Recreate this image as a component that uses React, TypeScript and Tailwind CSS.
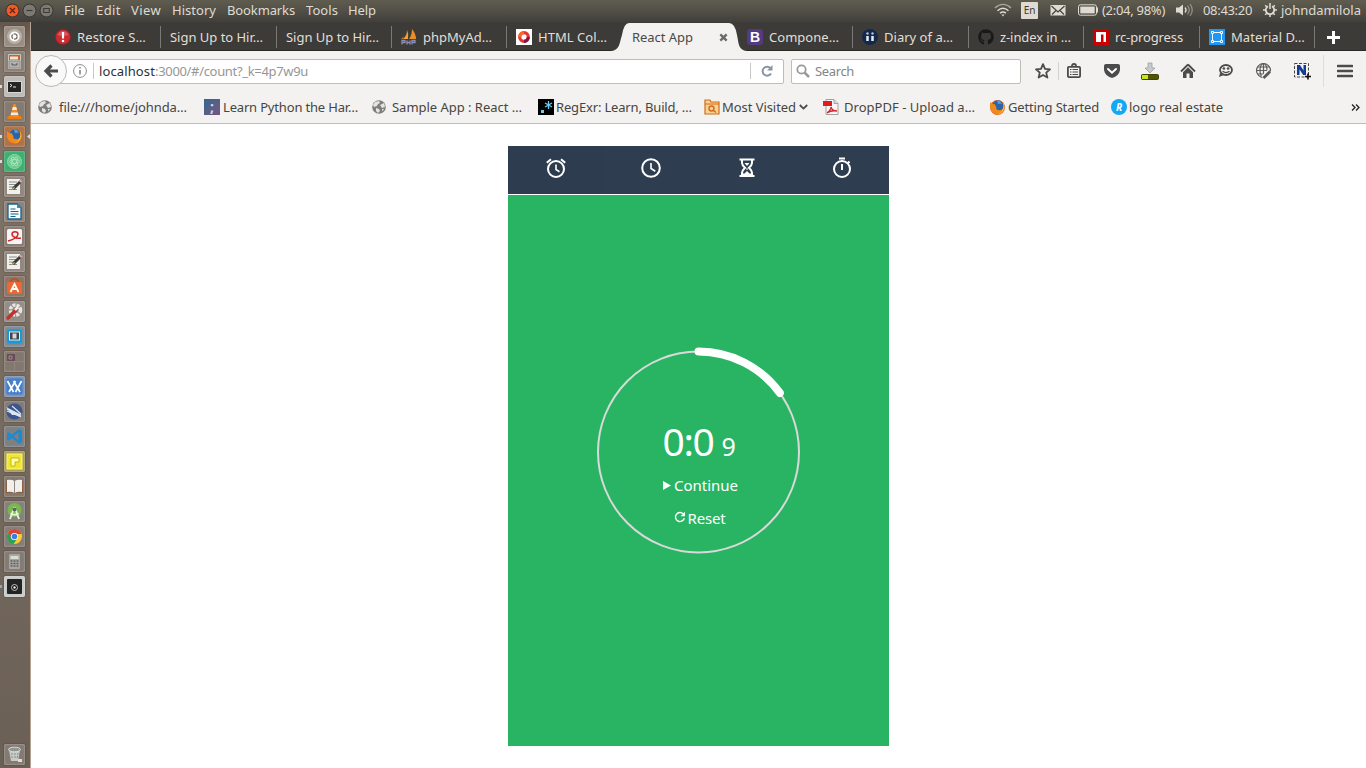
import { useLayoutEffect, useRef, useState } from "react";
import type { ReactNode } from "react";
import { FaGithub } from "react-icons/fa";

/* Single-line label whose letter spacing is adjusted so it fills `w` pixels. */
function Fit({ w, children, className = "" }: { w: number; children: string; className?: string }) {
  const ref = useRef<HTMLSpanElement>(null);
  const [spacing, setSpacing] = useState(0);
  useLayoutEffect(() => {
    if (ref.current) {
      const natural = ref.current.getBoundingClientRect().width - spacing * children.length;
      setSpacing((w - natural) / children.length);
    }
  }, [w, children]);
  return (
    <span ref={ref} className={`inline-block shrink-0 whitespace-nowrap ${className}`} style={{ letterSpacing: spacing }}>
      {children}
    </span>
  );
}

/* ---------- system bar ---------- */
const menus: [string, number, string][] = [
  ["File", 21, "w-8"],
  ["Edit", 25, "w-[35px]"],
  ["View", 30, "w-[41px]"],
  ["History", 44, "w-[55px]"],
  ["Bookmarks", 68, "w-[79px]"],
  ["Tools", 32, "w-[42px]"],
  ["Help", 28, "w-8"],
];

function SystemBar() {
  return (
    <header className="flex h-[22px] shrink-0 items-center bg-linear-to-b from-[#5f5c4f] via-[#524f47] to-[#403f3a] pb-[2px] text-[13px] leading-5 text-[#dfdbd2]">
      <svg width="64" height="22" viewBox="0 0 64 22" className="shrink-0 self-start">
        <circle cx="12.5" cy="10.5" r="6.5" fill="#f0592a" stroke="#38352f" />
        <path d="M10 8l5 5m0-5l-5 5" stroke="#5d2414" strokeWidth="1.2" />
        <circle cx="29.5" cy="10.5" r="6.5" fill="#7b7971" stroke="#383631" />
        <path d="M26.500 10.500h6" stroke="#3c3b37" strokeWidth="1.2" />
        <circle cx="46.500" cy="10.500" r="6.500" fill="#7b7971" stroke="#383631" />
        <rect x="43.700" y="8.500" width="5.600" height="4" fill="none" stroke="#3c3b37" />
      </svg>
      {menus.map(([label, w, cell]) => (
        <div key={label} className={`flex shrink-0 ${cell}`}>
          <Fit w={w}>{label}</Fit>
        </div>
      ))}
      <div className="ml-auto flex items-center">
        <svg width="18" height="16" viewBox="0 0 18 16" fill="none" stroke="#dfdbd2" strokeWidth="1.500" className="mr-[9px]">
          <path d="M1 6c5-4.600 11-4.600 16 0" opacity=".6" />
          <path d="M3.500 8.800c3.500-3.300 7.500-3.300 11 0M6 11.300c2-1.700 4-1.700 6 0" />
          <path d="M7.500 12.500L9 14.500l1.500-2z" fill="#dfdbd2" stroke="none" />
        </svg>
        <div className="mr-[12px] flex h-[17px] w-[17px] items-center justify-center rounded-[1px] bg-[#dfdbd2] text-[10px] leading-none text-[#3c3b37]">En</div>
        <svg width="16" height="12" viewBox="0 0 16 12" className="mr-[12px]">
          <rect x=".5" y="1" width="15" height="10.500" fill="#dfdbd2" />
          <path d="M1.500 2l6.500 6 6.500-6M2 10.500l4-4m8 4l-4-4" fill="none" stroke="#45433d" strokeWidth="1.200" />
        </svg>
        <svg width="21" height="12" viewBox="0 0 21 12" className="mr-[3px]">
          <rect x=".5" y=".8" width="18" height="10.400" rx="2" fill="none" stroke="#dfdbd2" />
          <rect x="2.300" y="2.600" width="14.400" height="6.800" fill="#dfdbd2" />
          <path d="M19.500 3.500v5" stroke="#dfdbd2" />
        </svg>
        <Fit w={63}>(2:04, 98%)</Fit>
        <svg width="17" height="14" viewBox="0 0 17 14" className="mr-[10px] ml-[11px]" fill="none" stroke="#dfdbd2">
          <path d="M0 4.500h3l4-3v11l-4-3H0z" fill="#dfdbd2" stroke="none" />
          <path d="M9 4.500c1.300 1.500 1.300 3.500 0 5" strokeWidth="1.300" />
          <path d="M11.500 2.500c2.300 3 2.300 6 0 9M14 1c3 4 3 8 0 12" opacity=".5" strokeWidth="1.200" />
        </svg>
        <Fit w={49}>08:43:20</Fit>
        <svg width="14" height="14" viewBox="0 0 14 14" className="mr-[4px] ml-[11px]" fill="none" stroke="#dfdbd2">
          <path d="M5 3.300a4.200 4.200 0 1 0 4 0" strokeWidth="1.800" />
          <path d="M7 0v6M2.200 2.200l1.500 1.500M11.800 2.200l-1.500 1.500M0 7h2.500M11.500 7H14M2.200 11.800l1.600-1.600M11.800 11.800l-1.600-1.600M7 14v-3" strokeWidth="1.500" />
        </svg>
        <Fit w={80} className="mr-[5px]">johndamilola</Fit>
      </div>
    </header>
  );
}

/* ---------- launcher ---------- */
const glyphs: { id: string; bg: string; art: ReactNode }[] = [
  { id: "dash", bg: "bg-[#9a8e83]", art: <><circle cx="10.500" cy="10.500" r="7.500" fill="#fff" opacity=".3" /><circle cx="10.500" cy="10.500" r="5" fill="#fff" /><circle cx="10.500" cy="10.500" r="2.600" fill="none" stroke="#7b7068" strokeWidth="1.400" strokeDasharray="4.500 1" /></> },
  { id: "files", bg: "bg-[#8b8077]", art: <><rect x="4" y="3" width="13" height="15" rx="1" fill="#c9c7c3" /><rect x="5" y="4" width="11" height="5" fill="#d35f22" /><path d="M6 5.500h8v3H6z" fill="#f6e6d0" /><rect x="5" y="10" width="11" height="7" fill="#b6b4b0" stroke="#77716b" strokeWidth=".6" /><path d="M8 12v2h5v-2" fill="none" stroke="#555" /></> },
  { id: "terminal", bg: "bg-[#bdbab7]", art: <><rect x="3" y="5" width="15" height="12" rx="1" fill="#d8d8d6" /><rect x="4" y="6" width="13" height="10" fill="#252525" /><path d="M6 8l2 1.500L6 11m3 0h3" fill="none" stroke="#e8e8e8" /></> },
  { id: "vlc", bg: "bg-[#857a71]", art: <><path d="M4 15h13l1 3H3z" fill="#ef7d0a" /><path d="M9.500 3h2L15 16H6z" fill="#f58b1f" /><path d="M8.800 6h3.400l.8 3H8zM7.300 11.500h6.400l.7 2.500H6.600z" fill="#eee" /></> },
  { id: "firefox", bg: "bg-[#ad734b]", art: <Fox /> },
  { id: "atom", bg: "bg-[#3fae70]", art: <><circle cx="10.500" cy="10.500" r="7" fill="#65c98b" stroke="#a3dfba" strokeWidth=".8" /><g fill="none" stroke="#b9e8c9" strokeWidth=".7"><ellipse cx="10.500" cy="10.500" rx="5" ry="2" /><ellipse cx="10.500" cy="10.500" rx="5" ry="2" transform="rotate(60 10.500 10.500)" /><ellipse cx="10.500" cy="10.500" rx="5" ry="2" transform="rotate(120 10.500 10.500)" /></g></> },
  { id: "gedit", bg: "bg-[#91877f]", art: <Pad /> },
  { id: "writer", bg: "bg-[#8d837b]", art: <><path d="M4 3h9l4 4v11H4z" fill="#fafafa" stroke="#15638e" strokeWidth="1.300" /><path d="M13 3l4 4h-4z" fill="#2a93c8" /><path d="M6.500 8h5m-5 2.500h8m-8 2.500h8m-8 2.500h5" stroke="#15638e" strokeWidth="1.200" /></> },
  { id: "evince", bg: "bg-[#8b7c76]", art: <><rect x="3" y="3" width="15" height="15" rx="1.500" fill="#f7f5f3" /><path d="M4 15c5-1 10-4 10-7s-6-3-6 0 5 5 9 4" fill="none" stroke="#cf2828" strokeWidth="1.500" /></> },
  { id: "notes", bg: "bg-[#91877f]", art: <Pad /> },
  { id: "software", bg: "bg-[#8c7468]", art: <><path d="M7 7V4.500Q10.500 1 14 4.500V7" fill="none" stroke="#c24a1a" strokeWidth="1.500" /><rect x="3" y="6" width="15" height="12" rx="1.500" fill="#ec6830" /><path d="M6.500 16l4-8 4 8m-6.500-3h5" fill="none" stroke="#fff" strokeWidth="1.800" /></> },
  { id: "settings", bg: "bg-[#948c86]", art: <><circle cx="11.500" cy="9" r="5" fill="none" stroke="#e7e5e3" strokeWidth="3.500" strokeDasharray="3 1" /><path d="M4 17l8-8" stroke="#c62f2b" strokeWidth="3.500" strokeLinecap="round" /><path d="M11 9l3-3" stroke="#eee" strokeWidth="2.500" /></> },
  { id: "vm", bg: "bg-[#7f8b92]", art: <><rect x="3" y="3.500" width="15" height="14" rx="3" fill="#1b97d5" /><rect x="5.500" y="6" width="10" height="8" fill="#3f4548" stroke="#e6eef2" /><rect x="8.500" y="7.500" width="4" height="5" fill="#d8d8d8" /></> },
  { id: "workspaces", bg: "bg-[#82786f]", art: <><path d="M0 10.500h21M10.500 0v21" stroke="#958b83" strokeWidth=".7" /><rect x="3" y="3" width="8" height="7" fill="#684c56" /><path d="M5 5h3v3H5z" fill="none" stroke="#b8a7ad" strokeWidth=".7" /></> },
  { id: "xx", bg: "bg-[#7d91b0]", art: <><rect x="2.500" y="2.500" width="16" height="16" rx="2" fill="#4380d4" /><path d="M3.500 5l6 11M11.500 5l-6.500 11M9.500 5l6.500 11M17.500 5l-6 11" fill="none" stroke="#fff" strokeWidth="1.700" /></> },
  { id: "kit", bg: "bg-[#827b78]", art: <><circle cx="10.500" cy="10.500" r="8" fill="#3b558d" /><path d="M2 6l16 8H8z" fill="#dde5f2" /><path d="M3 10l14 6M8 5l9 8M3 8l14 7" stroke="#dde5f2" strokeWidth="1.200" /></> },
  { id: "code", bg: "bg-[#7e8082]", art: <><path d="M14.500 3l3.500 2v11l-3.500 2z" fill="#198bd2" /><path d="M15 4.500L4 13.500M15 16.500L4 7" stroke="#198bd2" strokeWidth="2.300" /><path d="M4 7v7" stroke="#198bd2" strokeWidth="1.500" /></> },
  { id: "sticky", bg: "bg-[#a59b58]", art: <><rect x="3" y="3" width="15" height="15" fill="#f1e52d" stroke="#fcf784" /><path d="M7 15V7h8v4h-4v4z" fill="#fffbb1" stroke="#baa900" strokeWidth=".8" /></> },
  { id: "book", bg: "bg-[#827870]", art: <><path d="M2 5h17v12H2z" fill="#8c6040" /><path d="M3 4q4-1 7.500 1Q14 3 18 4v12q-4-1-7.500 1Q7 15 3 16z" fill="#f1efeb" /><path d="M10.500 5v12" stroke="#8d8780" /></> },
  { id: "studio", bg: "bg-[#85827a]", art: <><circle cx="10.500" cy="9" r="7" fill="#79b84c" /><path d="M10.500 6L6 18M10.500 6L15 18M6.500 12.500q4 2.500 8 0" fill="none" stroke="#edf2e9" strokeWidth="1.800" /><circle cx="10.500" cy="8.500" r="2" fill="#56695c" /></> },
  { id: "chrome", bg: "bg-[#857d76]", art: <><circle cx="10.500" cy="10.500" r="7.500" fill="#f8cc32" /><path d="M4 6.700A7.500 7.500 0 0 1 17.500 8h-7l-3 4.500z" fill="#dc4437" /><path d="M4 6.700A7.500 7.500 0 0 0 9.500 18l3.500-5-5.500-1z" fill="#27a25b" /><circle cx="10.500" cy="10.500" r="3.600" fill="#fff" /><circle cx="10.500" cy="10.500" r="2.800" fill="#397ee6" /></> },
  { id: "calc", bg: "bg-[#847b74]", art: <><rect x="5" y="3" width="11" height="15" rx="1" fill="#a8a6a2" /><path d="M6.500 5h8v3h-8z" fill="#d9dfd3" /><path d="M6.500 10h8m-8 2.500h8m-8 2.500h8" stroke="#62605d" strokeWidth="1.500" strokeDasharray="2 1" /></> },
  { id: "camera", bg: "bg-[#c8cbc7]", art: <><rect x="3" y="3" width="15" height="15" rx="1" fill="#222423" /><circle cx="10.500" cy="11.500" r="3" fill="#111" stroke="#c4c6c4" /><circle cx="10.500" cy="11.500" r="1.200" fill="#eee" /></> },
];

function Fox() {
  return (
    <>
      <circle cx="10.500" cy="10.500" r="7.500" fill="#e4651b" />
      <circle cx="11" cy="8.800" r="5.500" fill="#2b64a8" />
      <path d="M10 3q4 1 5 4-2-1-4 0z" fill="#58a5d8" />
      <path d="M3 5q2 3 5 2 0 2 1.500 3-1 3 2 3 3 1 5-2-1 6-6 6.500Q4 16 3 11z" fill="#f08a1c" />
      <path d="M16 5q3 5 0 9-2 3-5 3.500 7-4 5-12.500z" fill="#f9c22e" />
    </>
  );
}

function Pad() {
  return (
    <>
      <rect x="3" y="3" width="13" height="15" fill="#efefec" />
      <path d="M5 6h8M5 8.500h7M5 11h5M5 13.500h8" stroke="#8d8d8a" />
      <path d="M9 13l8-8" stroke="#3a3a34" strokeWidth="3" />
      <path d="M16 6l1.500-1.500" stroke="#d9a7b8" strokeWidth="3" />
      <path d="M8 14l2-3 1 1z" fill="#e4c865" />
    </>
  );
}

function Tile({ bg, children }: { bg: string; children: ReactNode }) {
  return (
    <div className={`h-[21px] w-[21px] shrink-0 rounded-[2px] shadow-[inset_0_0_2px_rgba(255,255,255,0.55),0_0_1px_1px_rgba(60,50,42,0.22)] ${bg}`}>
      <svg viewBox="0 0 21 21" width="21" height="21">{children}</svg>
    </div>
  );
}

function Launcher() {
  return (
    <aside className="flex w-[31px] shrink-0 flex-col gap-1 border-r border-[#b7a393] bg-linear-to-b from-[#63574d] via-[#83766a] via-5% to-[#6b6056] pt-1 pb-[3px]">
      {glyphs.map((g) => (
        <div key={g.id} className="flex items-center">
          <div className="flex w-1 shrink-0 items-center">
            {["terminal", "firefox", "atom", "camera"].includes(g.id) && <i className={`h-[3px] w-[2px] ${g.id === "camera" ? "bg-[#77afc5]" : "bg-[#ded9d3]"}`} />}
          </div>
          <Tile bg={g.bg}>{g.art}</Tile>
          {g.id === "firefox" && (
            <svg width="3" height="5" viewBox="0 0 3 5" className="ml-[2px]"><path d="M3 0v5L0 2.500z" fill="#ded9d3" /></svg>
          )}
        </div>
      ))}
      <div className="mt-auto pl-1">
        <Tile bg="bg-[#837a72]">
          <path d="M5 6l2 11h7l2-11z" fill="#c9cbc9" />
          <ellipse cx="10.500" cy="5.500" rx="6" ry="2.300" fill="#8f9593" stroke="#d8dcda" />
          <path d="M8 9v6m3-6v6m3-6l-1 6" stroke="#858b88" strokeDasharray="2 1" />
          <path d="M14 15h4v3h-4z" fill="#ddd" />
        </Tile>
      </div>
    </aside>
  );
}

/* ---------- tabs ---------- */
function S16({ children }: { children: ReactNode }) {
  return <svg width="16" height="16" viewBox="0 0 16 16" className="shrink-0">{children}</svg>;
}

function Tab({ cell, w, label, icon, last }: { cell: string; w: number; label: string; icon?: ReactNode; last?: boolean }) {
  return (
    <div className={`flex h-[22px] shrink-0 items-center gap-[6px] pl-[9px] ${cell} ${last ? "" : "border-r border-[#7b7975]"}`}>
      {icon}
      <Fit w={w} className="mt-[2px]">{label}</Fit>
    </div>
  );
}

function TabStrip() {
  return (
    <div className="flex h-[29px] shrink-0 items-center border-b border-[#292825] bg-[#3c3b37] pt-[2px] pl-[15px] text-[13px] text-[#e2dfd8]">
      <Tab cell="w-[115px]" w={69} label="Restore S…" icon={<S16><circle cx="8" cy="8" r="7.500" fill="#cb2b31" stroke="#932328" strokeWidth=".8" /><path d="M2 6Q8-2 14 6 8 8 2 6z" fill="#e1747a" opacity=".6" /><path d="M8 3v6.500" stroke="#fff" strokeWidth="2.200" /><circle cx="8" cy="12" r="1.300" fill="#fff" /></S16>} />
      <Tab cell="w-[116px]" w={93} label="Sign Up to Hir…" />
      <Tab cell="w-[115px]" w={93} label="Sign Up to Hir…" />
      <Tab cell="w-[115px]" w={69} label="phpMyAd…" icon={<S16><path d="M6 1q2 4 1 9H2q4-3 4-9z" fill="#f6a12e" /><path d="M11 0q4 5 4 10H8q3-4 3-10z" fill="#ed8e22" /><path d="M3 4q0 4-3 6h2z" fill="#c3843a" /><path d="M1 15.500v-4h3v2H1m5 2v-4m0 2h3m0-2v4m2 0v-4h3v2h-3" fill="none" stroke="#8a8dbb" strokeWidth="1.300" /></S16>} />
      <Tab cell="w-[111px]" w={69} last label="HTML Col…" icon={<S16><rect width="16" height="16" fill="#fff" /><circle cx="8" cy="8" r="4.300" fill="none" stroke="#e9332e" strokeWidth="3.200" /><path d="M8 12.300A4.300 4.300 0 0 0 12.300 8" fill="none" stroke="#7e1747" strokeWidth="3.200" /><path d="M3.700 8A4.300 4.300 0 0 1 8 3.700" fill="none" stroke="#f76831" strokeWidth="3.200" /></S16>} />
      <div className="-mt-[2px] -ml-[7px] flex h-[29px] w-[136px] shrink-0 self-start text-[#4b4944]">
        <svg width="18" height="29" viewBox="0 0 18 29" className="shrink-0"><path d="M0 29C9 28 8 22 11 13Q13 1 18 1v28z" fill="#f3f2f1" /></svg>
        <div className="mt-px flex w-[100px] items-center justify-between bg-[#f3f2f1]">
          <Fit w={61} className="mt-[2px] ml-[3px]">React App</Fit>
          <svg width="9" height="9" viewBox="0 0 10 10" className="mr-px"><path d="M1.500 1.500l7 7m0-7l-7 7" stroke="#6b6965" strokeWidth="2.600" /></svg>
        </div>
        <svg width="18" height="29" viewBox="0 0 18 29" className="shrink-0"><path d="M18 29C9 28 10 22 8 13Q6 1 0 1v28z" fill="#f3f2f1" /></svg>
      </div>
      <Tab cell="-ml-[9px] w-[115px]" w={70} label="Compone…" icon={<BootstrapBadge />} />
      <Tab cell="w-[116px]" w={69} label="Diary of a…" icon={<S16><circle cx="8" cy="8" r="8" fill="#12294b" /><path d="M5.500 7v5M10.500 7v5" stroke="#e9edf3" strokeWidth="2.500" /><circle cx="5.500" cy="4.500" r="1.200" fill="#b9c4d4" /><circle cx="10.500" cy="4.500" r="1.200" fill="#b9c4d4" /></S16>} />
      <Tab cell="w-[115px]" w={71} label="z-index in …" icon={<FaGithub className="h-4 w-4 text-[#191919]" />} />
      <Tab cell="w-[116px]" w={68} label="rc-progress" icon={<S16><rect width="16" height="16" fill="#cb0000" /><path d="M3 3h10v10h-2.500V5.500H8V13H3z" fill="#fff" /></S16>} />
      <Tab cell="w-[115px]" w={74} label="Material D…" icon={<S16><rect width="16" height="16" fill="#2196f3" /><path d="M3.500 3.500h9v9h-9z" fill="none" stroke="#fff" /><path d="M2.500 2.500h2v2h-2zM11.500 2.500h2v2h-2zM2.500 11.500h2v2h-2zM11.500 11.500h2v2h-2z" fill="#2196f3" stroke="#fff" /></S16>} />
      <svg width="13" height="13" viewBox="0 0 13 13" className="ml-[12px] shrink-0"><path d="M6.500 0v13M0 6.500h13" stroke="#fff" strokeWidth="3" /></svg>
    </div>
  );
}

function BootstrapBadge() {
  return (
    <div className="flex h-4 w-4 shrink-0 items-center justify-center rounded-[3px] bg-[#553a7f] font-['Liberation_Sans'] text-[14px] leading-none font-bold text-white">B</div>
  );
}

/* ---------- navigation toolbar ---------- */
function Tool({ children }: { children: ReactNode }) {
  return <div className="flex w-[38px] shrink-0 justify-center"><svg width="18" height="18" viewBox="0 0 18 18">{children}</svg></div>;
}

function Toolbar() {
  return (
    <div className="flex h-10 shrink-0 items-center bg-[#f3f2f1] text-[13px]">
      <div className="z-10 ml-[4px] flex h-8 w-8 shrink-0 items-center justify-center rounded-full border border-[#b9b8b5] bg-[#faf9f9]">
        <svg width="16" height="16" viewBox="0 0 16 16"><path d="M8.500 2.500L3 8l5.500 5.500M3.500 8H15" fill="none" stroke="#4b4b4b" strokeWidth="3.200" /></svg>
      </div>
      <div className="-ml-2 flex h-[25px] w-[725px] shrink-0 items-center rounded-r-[2px] border border-[#bebdba] bg-white pl-[13px]">
        <svg width="14" height="14" viewBox="0 0 14 14" className="shrink-0"><circle cx="7" cy="7" r="6.400" fill="none" stroke="#8c8c8c" /><path d="M7 6v4.500M7 3v1.500" stroke="#777" strokeWidth="1.400" /></svg>
        <i className="ml-[6px] h-4 w-px bg-[#c9c9c9]" />
        <Fit w={56} className="mt-[2px] ml-[5px] text-[#303030]">localhost</Fit>
        <Fit w={153} className="mt-[2px] text-[#969696]">:3000/#/count?_k=4p7w9u</Fit>
        <div className="ml-auto flex h-4 w-[33px] items-center justify-center border-l border-[#c9c9c9]">
          <svg width="12" height="12" viewBox="0 0 12 12"><path d="M9.500 3.200A4.500 4.500 0 1 0 10 8.500" fill="none" stroke="#8795a6" strokeWidth="2" /><path d="M11.500 0v5.500H6z" fill="#8795a6" /></svg>
        </div>
      </div>
      <div className="ml-[7px] flex h-[25px] w-[230px] shrink-0 items-center rounded-[2px] border border-[#bebdba] bg-white pl-[4px]">
        <svg width="14" height="14" viewBox="0 0 14 14" className="shrink-0"><circle cx="5.500" cy="5.500" r="4.200" fill="none" stroke="#999" strokeWidth="1.800" /><path d="M8.500 8.500L13 13" stroke="#999" strokeWidth="2.500" /></svg>
        <Fit w={39} className="mt-[2px] ml-[5px] text-[#858585]">Search</Fit>
      </div>
      <div className="flex w-[37px] shrink-0 justify-end pr-[7px]">
        <svg width="16" height="16" viewBox="0 0 16 16"><path d="M8 1.200l2 4.700 5 .4-3.800 3.300 1.200 5L8 12l-4.400 2.600 1.200-5L1 6.300l5-.4z" fill="none" stroke="#4b4b4b" strokeWidth="1.800" strokeLinejoin="round" /></svg>
      </div>
      <i className="h-[18px] w-px bg-[#d3d2d0]" />
      <div className="mr-1 flex w-[30px] justify-center">
        <svg width="16" height="16" viewBox="0 0 16 16" fill="none" stroke="#4b4b4b"><rect x="1.900" y="3.900" width="12.200" height="10.200" rx="1" strokeWidth="1.800" /><path d="M6 3q0-2 2-2t2 2" strokeWidth="1.800" /><path d="M4 6.500h1.500m1 0H12M4 9h1.500m1 0H12M4 11.500h1.500m1 0H12" strokeWidth="1.200" /></svg>
      </div>
      <Tool><path d="M3 2h12q2 0 2 2v4q-1 6-8 8-7-2-8-8V4q0-2 2-2z" fill="#4b4b4b" /><path d="M5 7l4 3.700L13 7" fill="none" stroke="#fff" strokeWidth="2" strokeLinecap="round" /></Tool>
      <Tool><path d="M7 1h4v5h3l-5 5-5-5h3z" fill="#c8cbcd" stroke="#9ca0a4" strokeWidth=".8" /><rect x=".5" y="12.500" width="17" height="5" rx="1" fill="#4f5500" stroke="#3f4400" /><path d="M1 13h6v4H1z" fill="#c5e51c" /></Tool>
      <Tool><path d="M9 2.500L2 9.500" stroke="#4b4b4b" strokeWidth="1.800" /><path d="M9 2.500l7 7" stroke="#4b4b4b" strokeWidth="1.800" /><path d="M4 10.200l5-5 5 5V16h-3.500v-4.500h-3V16H4z" fill="#4b4b4b" /></Tool>
      <Tool><ellipse cx="9" cy="8" rx="6" ry="5" fill="none" stroke="#4b4b4b" strokeWidth="1.800" /><path d="M3 11l-1 4 5-2z" fill="#4b4b4b" /><circle cx="6.900" cy="6.500" r="1.300" fill="#4b4b4b" /><circle cx="11.100" cy="6.500" r="1.300" fill="#4b4b4b" /><path d="M5.500 9.300q3.500 2.500 7 0" fill="none" stroke="#4b4b4b" strokeWidth="1.200" /></Tool>
      <Tool><g fill="none" stroke="#5c5c5c" strokeWidth="1.200"><circle cx="8.500" cy="8.500" r="7" /><ellipse cx="8.500" cy="8.500" rx="3.500" ry="7" /><path d="M1.500 8.500h14M2.500 5h12M2.500 12h12M8.500 1.500v14" /></g><path d="M8 16l7-7" stroke="#f3f2f1" strokeWidth="5" /><path d="M8.500 16l6.500-6.500" stroke="#555" strokeWidth="2.600" /></Tool>
      <Tool><path d="M1.500 1.500h14v13.500h-14z" fill="none" stroke="#444" strokeDasharray="3 1.500" /><path d="M4 3h3l3.500 5.500V3H13v10h-2.800L6.500 7.500V13H4z" fill="#133c94" /><path d="M15 11.500v6m-3-3h6" stroke="#111" strokeWidth="1.600" /></Tool>
      <i className="ml-[2px] h-8 w-px bg-[#dddcda]" />
      <div className="flex w-[43px] justify-center"><svg width="16" height="14" viewBox="0 0 16 14"><path d="M1 2h14M1 7h14M1 12h14" stroke="#4b4b4b" strokeWidth="2.600" strokeLinecap="round" /></svg></div>
    </div>
  );
}

/* ---------- bookmarks ---------- */
function Globe() {
  return <svg width="14" height="14" viewBox="0 0 14 14" className="mr-[6px] shrink-0"><circle cx="7" cy="7" r="6.800" fill="#7e7e7e" /><path d="M3 2l4-1 1 2-2 1-1 2-3 1-1-2zM8 5l4-2 1 4-3 1zM4 8l3 1 1 2-2 2-2-2zM10 9l2 0-1.500 2.500z" fill="#e4e4e3" /></svg>;
}

function Bookmark({ cell, w, label, icon, children }: { cell: string; w: number; label: string; icon: ReactNode; children?: ReactNode }) {
  return <div className={`flex shrink-0 items-center ${cell}`}>{icon}<Fit w={w} className="mt-[2px]">{label}</Fit>{children}</div>;
}

function Bookmarks() {
  return (
    <div className="flex h-[33px] shrink-0 items-center border-b border-[#bfbebc] bg-[#f3f2f1] pl-[7px] text-[13px] text-[#474540]">
      <Bookmark cell="w-[166px]" w={128} label="file:///home/johnda…" icon={<><Globe /><i className="w-px" /></>} />
      <Bookmark cell="w-[168px]" w={135} label="Learn Python the Har…" icon={<div className="mr-[3px] flex h-4 w-4 items-center justify-center bg-linear-to-br from-[#2c678e] to-[#75567f] text-[14px] leading-none font-bold text-[#cddbe7]">;</div>} />
      <Bookmark cell="w-[166px]" w={130} label="Sample App : React …" icon={<Globe />} />
      <Bookmark cell="w-[166px]" w={136} label="RegExr: Learn, Build, …" icon={<div className="mr-[2px]"><S16><rect width="16" height="16" fill="#000" /><path d="M3 11h3v3H3z" fill="#70cbed" /><path d="M10.500 2v8M7 4l7 4M14 4L7 8" stroke="#70cbed" strokeWidth="1.300" /></S16></div>} />
      <Bookmark cell="w-[119px]" w={74} label="Most Visited" icon={<div className="mr-[2px]"><S16><path d="M1 1h5l1 2h8v12H1z" fill="#f9d19a" stroke="#d46b12" strokeWidth="1.200" /><path d="M1 5h14" stroke="#d46b12" /><circle cx="7.500" cy="9.500" r="2.500" fill="none" stroke="#d46b12" strokeWidth="1.400" /><path d="M9.500 11.500l2.500 2" stroke="#d46b12" strokeWidth="1.500" /></S16></div>}>
        <svg width="9" height="6" viewBox="0 0 9 6" className="ml-[3px]"><path d="M.8 1l3.700 3.600L8.200 1" fill="none" stroke="#4b4944" strokeWidth="1.800" /></svg>
      </Bookmark>
      <Bookmark cell="w-[166px]" w={131} label="DropPDF - Upload a…" icon={<div className="mr-[5px]"><S16><path d="M3 .5h8l4 4v11H3z" fill="#f7f7f7" stroke="#a2a2a2" /><path d="M11 .5v4h4" fill="#ddd" stroke="#a2a2a2" /><rect y="2" width="9" height="5" fill="#df1d20" /><path d="M4 14q4-3 4-6 1 4 6 4-6-1-10 2z" fill="none" stroke="#d42529" strokeWidth="1.300" /></S16></div>} />
      <Bookmark cell="w-[121px]" w={91} label="Getting Started" icon={<svg width="17" height="17" viewBox="2 2 17 17" className="mr-[2px]"><Fox /></svg>} />
      <Bookmark cell="w-[180px]" w={94} label="logo real estate" icon={<div className="mr-[2px] ml-px flex h-4 w-4 shrink-0 items-center justify-center rounded-full bg-[#14a8f4] text-[10px] leading-none font-bold text-white italic">R</div>} />
      <svg width="9" height="7" viewBox="0 0 9 7" className="mr-[6px] ml-auto"><path d="M1 .5l3 3-3 3M5 .5l3 3-3 3" fill="none" stroke="#222" strokeWidth="1.300" /></svg>
    </div>
  );
}

/* ---------- countdown app ---------- */
function NavCell({ className = "", children }: { className?: string; children: ReactNode }) {
  return (
    <div className={`flex items-center justify-center pb-1 pl-px ${className}`}>
      <svg width="22" height="22" viewBox="0 0 22 22" fill="none" stroke="#fff" strokeWidth="2">{children}</svg>
    </div>
  );
}

function Countdown() {
  return (
    <main className="flex flex-1 justify-center bg-white pt-[22px]">
      <div className="flex h-[600px] w-[381px] flex-col">
        <nav className="mb-px grid h-12 grid-cols-4 bg-[#2e3e50]">
          <NavCell className="bg-[#2d3c4e]">
            <circle cx="11" cy="12" r="8" />
            <path d="M11 7.500v5l3.500 2.200" strokeWidth="1.600" />
            <path d="M1.800 5.800l4.200-3.600M20.200 5.800L16 2.200" />
          </NavCell>
          <NavCell>
            <circle cx="11" cy="11" r="8.800" />
            <path d="M11 6v5.500l4.300 2.700" strokeWidth="1.600" />
          </NavCell>
          <NavCell className="pl-[2px]">
            <path d="M3.500 2.500h15M3.500 19h15" />
            <path d="M6 3v3q0 2 3 4.800-3 3-3 5V19M16 3v3q0 2-3 4.800 3 3 3 5V19" />
            <path d="M8.500 6h5L11 9zM6 20v-3.500h2.500L11 14l2.500 2.500H16V20z" fill="#fff" stroke="none" />
            <path d="M11 11v2" strokeWidth="1" />
          </NavCell>
          <NavCell>
            <circle cx="11" cy="12" r="8" />
            <path d="M8 1.500h6M11 7v6M16.500 6.500l2-2" />
          </NavCell>
        </nav>
        <section className="grid flex-1 justify-center bg-[#29b463] pt-[152px] text-white">
          <svg width="211" height="210" viewBox="0 0 211 210" className="col-start-1 row-start-1">
            <circle cx="105.500" cy="105" r="100.500" fill="none" stroke="#d9d9d9" strokeWidth="2" />
            <circle cx="105.500" cy="105" r="100.500" fill="none" stroke="#fff" strokeWidth="8" strokeLinecap="round" pathLength="100" strokeDasharray="15 100" transform="rotate(-90 105.500 105)" />
          </svg>
          <div className="col-start-1 row-start-1 flex flex-col items-center pt-[69px] pl-[2px]">
            <div className="flex h-[50px] items-baseline">
              <Fit w={51} className="-ml-px text-[39px] leading-[50px]">0:0</Fit>
              <Fit w={14} className="ml-[8px] text-[25px]">9</Fit>
            </div>
            <div className="mt-[7px] flex h-6 items-center pl-[2px] text-[15px]">
              <svg width="8" height="9" viewBox="0 0 8 9" className="mr-[3px]"><path d="M0 0l8 4.500L0 9z" fill="#fff" /></svg>
              <Fit w={64}>Continue</Fit>
            </div>
            <div className="mt-[9px] flex h-6 items-center text-[15px]">
              <svg width="12" height="12" viewBox="0 0 12 12" className="mr-[2px] mb-[3px]"><path d="M9.300 3A4.500 4.500 0 1 0 10.300 7.300" fill="none" stroke="#fff" strokeWidth="1.400" /><path d="M11 .8v4.400H6.600z" fill="#fff" /></svg>
              <Fit w={38}>Reset</Fit>
            </div>
          </div>
        </section>
      </div>
    </main>
  );
}

export default function App() {
  return (
    <div className="flex h-[768px] w-[1366px] flex-col overflow-hidden bg-white font-['Noto_Sans',sans-serif]">
      <SystemBar />
      <div className="flex min-h-0 flex-1">
        <Launcher />
        <div className="flex min-w-0 flex-1 flex-col">
          <TabStrip />
          <Toolbar />
          <Bookmarks />
          <Countdown />
        </div>
      </div>
    </div>
  );
}
